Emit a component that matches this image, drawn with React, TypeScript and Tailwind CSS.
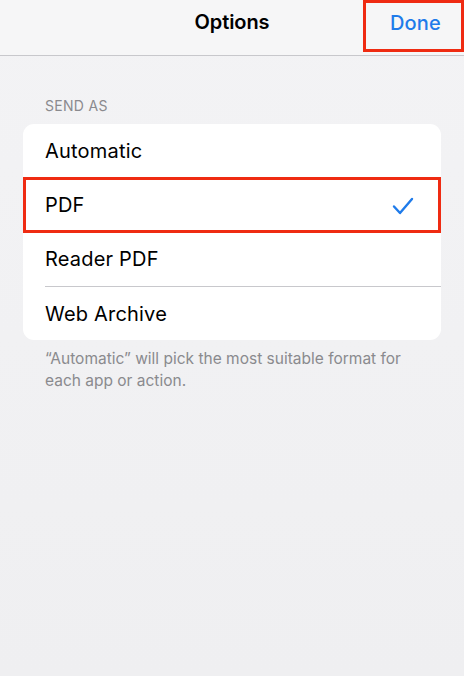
import { useState } from "react";

const formats = ["Automatic", "PDF", "Reader PDF", "Web Archive"];

export default function App() {
  const [selected, setSelected] = useState("PDF");

  return (
    <div
      className="h-[676px] w-[464px] overflow-hidden bg-gradient-to-b from-[#f3f3f5] to-[#efeff1] text-black"
      style={{ fontFamily: "Inter, 'Open Sans', sans-serif" }}
    >
      {/* Nav bar */}
      <header className="relative flex h-[56px] items-center justify-center border-b border-[#c8c8cc] bg-[#f6f6f7]">
        <h1 className="pb-[11px] text-[20px] font-semibold tracking-[-0.1px]">Options</h1>
        <button className="absolute right-0 top-0 flex h-[52px] w-[101px] items-start justify-center border-[3px] border-[#ef2b12] pl-[4px] pt-[5px] text-[20px] font-medium tracking-[0.2px] text-[#1f7bea]">
          Done
        </button>
      </header>

      <section className="px-[23px] pt-[39px]">
        <p className="pb-[8px] pl-[22px] text-[14px] tracking-[0.3px] text-[#8a8a8e]">SEND AS</p>
        <div className="rounded-[11px] bg-white">
          {formats.map((f, i) => {
            const active = f === selected;
            return (
              <div
                key={f}
                onClick={() => setSelected(f)}
                className={
                  active
                    ? "flex h-[56px] -my-[1px] items-center justify-between border-[3px] border-[#ef2b12] pl-[19px] pr-[24px]"
                    : "flex h-[54px] items-center pl-[22px]"
                }
              >
                <div
                  className={
                    i > 0 && !active && formats[i - 1] !== selected
                      ? "flex h-full flex-1 items-center border-t border-[#c8c8cc]"
                      : "flex h-full flex-1 items-center"
                  }
                >
                  <span className="text-[20px] tracking-[0.2px]">{f}</span>
                </div>
                {active && (
                  <svg width="22" height="18" viewBox="0 0 22 18" fill="none" className="mt-[2px]">
                    <path
                      d="M2 9.5 L8 16 L20 2"
                      stroke="#1f7bea"
                      strokeWidth="2.4"
                      strokeLinecap="round"
                      strokeLinejoin="round"
                    />
                  </svg>
                )}
              </div>
            );
          })}
        </div>
        <p className="pl-[22px] pr-[24px] pt-[8px] text-[15.5px] leading-[22px] text-[#8a8a8e]">
          “Automatic” will pick the most suitable format for each app or action.
        </p>
      </section>
    </div>
  );
}
